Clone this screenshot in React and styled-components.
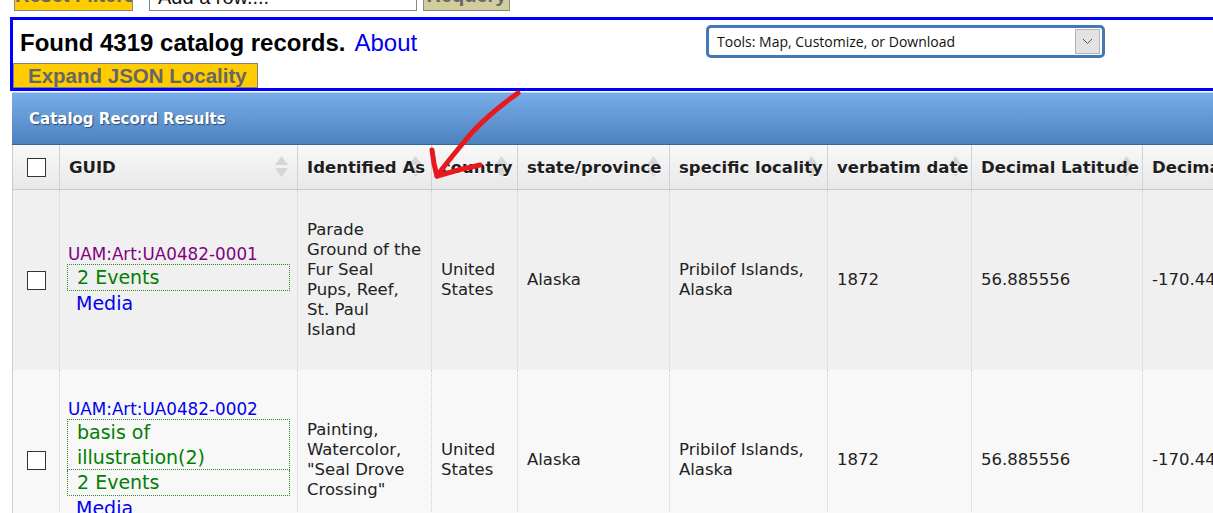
import React from 'react';
import styled, { createGlobalStyle } from 'styled-components';

const GlobalStyle = createGlobalStyle`
	html, body {
		margin: 0;
		padding: 0;
		background: #fff;
		overflow: hidden;
	}
	body {
		font-family: 'DejaVu Sans', Verdana, sans-serif;
		color: #222;
	}
`;

const Page = styled.div`
	position: relative;
	padding-left: 10px;
	width: 1300px;
`;

const Toolbar = styled.div`
	display: flex;
	align-items: flex-end;
	height: 32px;
	margin-top: -21px;
	padding-left: 4px;
`;

const ToolButton = styled.button`
	height: 32px;
	width: ${(p) => p.$width}px;
	margin-right: ${(p) => p.$gap || 0}px;
	padding: 0;
	border: 1px solid #888;
	background: ${(p) => (p.$muted ? '#d1cd9d' : '#ffcc00')};
	color: #666;
	font: bold 20px 'Liberation Sans', Arial, sans-serif;
	white-space: nowrap;
	overflow: hidden;
`;

const RowPicker = styled.div`
	box-sizing: border-box;
	height: 33px;
	width: 268px;
	margin-right: 6px;
	padding: 0 8px;
	border: 1px solid #888;
	background: #fff;
	font: 20px 'Liberation Sans', Arial, sans-serif;
	line-height: 36px;
	color: #111;
	white-space: nowrap;
`;

const ResultsBox = styled.div`
	margin-top: 6px;
	border: 3px solid #0000ff;
	border-right: none;
	width: 1290px;
`;

const TitleRow = styled.div`
	display: grid;
	grid-template-columns: 693px auto;
	align-items: center;
	height: 43px;
`;

const Found = styled.h2`
	margin: 0;
	padding-left: 7px;
	padding-top: 2px;
	font: bold 24px 'Liberation Sans', Arial, sans-serif;
	color: #000;
`;

const AboutLink = styled.a`
	margin-left: 9px;
	font-weight: normal;
	color: #0000ee;
	text-decoration: none;
`;

const ToolsFrame = styled.div`
	box-sizing: border-box;
	display: flex;
	align-items: center;
	justify-content: space-between;
	width: 399px;
	height: 33px;
	border: 3px solid #4279b5;
	border-radius: 5px;
	background: #fff;
	padding: 0 2px 0 8px;
	font: 14px 'Open Sans', 'Noto Sans', sans-serif;
	color: #111;
`;

const ToolsArrow = styled.span`
	box-sizing: border-box;
	display: flex;
	align-items: center;
	justify-content: center;
	width: 25px;
	height: 25px;
	background: #e3e3e3;
	border: 1px solid #b5b5b5;
`;

const ExpandButton = styled.button`
	display: block;
	height: 25px;
	width: 245px;
	padding: 0 0 0 14px;
	text-align: left;
	border: 1px solid #808080;
	background: #ffcc00;
	color: #666;
	font: bold 20.5px 'Liberation Sans', Arial, sans-serif;
	line-height: 22px;
	white-space: nowrap;
`;

const Grid = styled.div`
	margin-left: 2px;
	margin-top: 1px;
	border-top: 1px solid #c2dbf3;
`;

const GridCaption = styled.div`
	height: 51px;
	display: flex;
	align-items: center;
	padding-left: 17px;
	background: linear-gradient(#78ade9, #4d82c0);
	border-bottom: 1px solid #336699;
	color: #fff;
	font-weight: bold;
	font-size: 15px;
	text-shadow: 1px 1px 1px #2a4d75;
`;

const Table = styled.table`
	border-collapse: collapse;
	table-layout: fixed;
	width: 1300px;
	border-left: 1px solid #ccc;
`;

const HeadCell = styled.th`
	position: relative;
	height: 44px;
	padding: 0 0 0 ${(p) => (p.$box ? 0 : 9)}px;
	text-align: ${(p) => (p.$box ? 'center' : 'left')};
	background: linear-gradient(#f8f8f8, #e8e8e8);
	border-right: 1px solid #d2d2d2;
	border-bottom: 1px solid #c8c8c8;
	font-size: 16.5px;
	font-weight: bold;
	color: #1e1e1e;
	white-space: nowrap;
	text-shadow: 0 1px 0 #fff;
`;

const HeadLabel = styled.span`
	position: relative;
	z-index: 1;
`;

const SortMark = styled.svg`
	position: absolute;
	z-index: 0;
	right: 7px;
	top: 9px;
`;

const Row = styled.tr`
	background: ${(p) => (p.$alt ? '#f8f8f8' : '#f0f0f0')};
`;

const Cell = styled.td`
	padding: 30px 9px;
	text-align: ${(p) => (p.$box ? 'center' : 'left')};
	vertical-align: middle;
	border-right: 1px dotted #cfcfcf;
	font-size: 16.5px;
	line-height: 20px;
	color: #222;
`;

const Check = styled.span`
	display: inline-block;
	width: 17px;
	height: 17px;
	border: 1px solid #333;
	background: #fff;
	vertical-align: middle;
`;

const Guid = styled.a`
	display: block;
	font-size: 16.8px;
	line-height: 19px;
	margin-left: -1px;
	white-space: nowrap;
	color: ${(p) => (p.$visited ? '#800080' : '#0000ee')};
	text-decoration: none;
`;

const Tag = styled.div`
	margin: 0 -2px 0 -2px;
	padding: 0 12px 0 9px;
	border: 1px dotted #2e8b2e;
	& + & {
		border-top: none;
	}
	font-size: 19px;
	line-height: 24.5px;
	color: #008000;
`;

const MediaLink = styled.a`
	display: block;
	padding-left: 7px;
	font-size: 19px;
	line-height: 24px;
	color: #0000ee;
	text-decoration: none;
`;

const Scribble = styled.svg`
	position: absolute;
	left: 420px;
	top: 105px;
	z-index: 5;
	pointer-events: none;
`;

const columns = [
	{ key: 'box', width: 47 },
	{ key: 'guid', title: 'GUID', width: 238 },
	{ key: 'ident', title: 'Identified As', width: 134 },
	{ key: 'country', title: 'country', width: 86 },
	{ key: 'state', title: 'state/province', width: 152 },
	{ key: 'loc', title: 'specific locality', width: 158 },
	{ key: 'date', title: 'verbatim date', width: 144 },
	{ key: 'lat', title: 'Decimal Latitude', width: 171 },
	{ key: 'lng', title: 'Decimal Longitude', width: 170 },
];

const records = [
	{
		guid: 'UAM:Art:UA0482-0001',
		visited: true,
		tags: ['2 Events'],
		ident: 'Parade Ground of the Fur Seal Pups, Reef, St. Paul Island',
		country: 'United States',
		state: 'Alaska',
		loc: 'Pribilof Islands, Alaska',
		date: '1872',
		lat: '56.885556',
		lng: '-170.44',
	},
	{
		guid: 'UAM:Art:UA0482-0002',
		tags: ['basis of illustration(2)', '2 Events'],
		ident: 'Painting, Watercolor, "Seal Drove Crossing"',
		country: 'United States',
		state: 'Alaska',
		loc: 'Pribilof Islands, Alaska',
		date: '1872',
		lat: '56.885556',
		lng: '-170.44',
	},
];

const SortIcon = () => (
	<SortMark width='17' height='25' viewBox='0 0 17 25'>
		<polygon points='8.5,2 15,11 2,11' fill='#d6d6d6' />
		<polygon points='2,14 15,14 8.5,23' fill='#d6d6d6' />
	</SortMark>
);

const App = () => {
	return (
		<Page>
			<GlobalStyle />
			<Toolbar>
				<ToolButton $width={119} $gap={16}>Reset Filters</ToolButton>
				<RowPicker>Add a row....</RowPicker>
				<ToolButton $width={87} $muted>Requery</ToolButton>
			</Toolbar>

			<ResultsBox>
				<TitleRow>
					<Found>
						Found 4319 catalog records.
						<AboutLink href='#'>About</AboutLink>
					</Found>
					<ToolsFrame>
						<span>Tools: Map, Customize, or Download</span>
						<ToolsArrow>
							<svg width='11' height='7' viewBox='0 0 11 7'>
								<polyline points='1,1 5.5,5.5 10,1' fill='none' stroke='#555' strokeWidth='1' />
							</svg>
						</ToolsArrow>
					</ToolsFrame>
				</TitleRow>
				<ExpandButton>Expand JSON Locality</ExpandButton>
			</ResultsBox>

			<Grid>
				<GridCaption>Catalog Record Results</GridCaption>
				<Table>
					<colgroup>
						{columns.map((c) => (
							<col key={c.key} style={{ width: c.width }} />
						))}
					</colgroup>
					<thead>
						<tr>
							{columns.map((c) =>
								c.key === 'box' ? (
									<HeadCell key={c.key} $box>
										<Check />
									</HeadCell>
								) : (
									<HeadCell key={c.key}>
										<SortIcon />
										<HeadLabel>{c.title}</HeadLabel>
									</HeadCell>
								)
							)}
						</tr>
					</thead>
					<tbody>
						{records.map((r, i) => (
							<Row key={r.guid} $alt={i % 2 === 1}>
								<Cell $box>
									<Check />
								</Cell>
								<Cell>
									<Guid href='#' $visited={r.visited}>
										{r.guid}
									</Guid>
									{r.tags.map((t) => (
										<Tag key={t}>{t}</Tag>
									))}
									<MediaLink href='#'>Media</MediaLink>
								</Cell>
								<Cell>{r.ident}</Cell>
								<Cell>{r.country}</Cell>
								<Cell>{r.state}</Cell>
								<Cell>{r.loc}</Cell>
								<Cell>{r.date}</Cell>
								<Cell>{r.lat}</Cell>
								<Cell>{r.lng}</Cell>
							</Row>
						))}
					</tbody>
				</Table>
			</Grid>

			{/* red hand-drawn pointer over the header row */}
			<Scribble width='110' height='100' viewBox='0 0 110 100'>
				<path
					d='M98 9 C80 22 58 40 44 58 C34 70 24 82 17 92'
					fill='none'
					stroke='#e8191e'
					strokeWidth='5'
					strokeLinecap='round'
				/>
				<path
					d='M12 66 C13 76 15 85 17 92 C30 88 45 84 60 81'
					fill='none'
					stroke='#e8191e'
					strokeWidth='5'
					strokeLinecap='round'
					strokeLinejoin='round'
				/>
			</Scribble>
		</Page>
	);
};

export default App;
